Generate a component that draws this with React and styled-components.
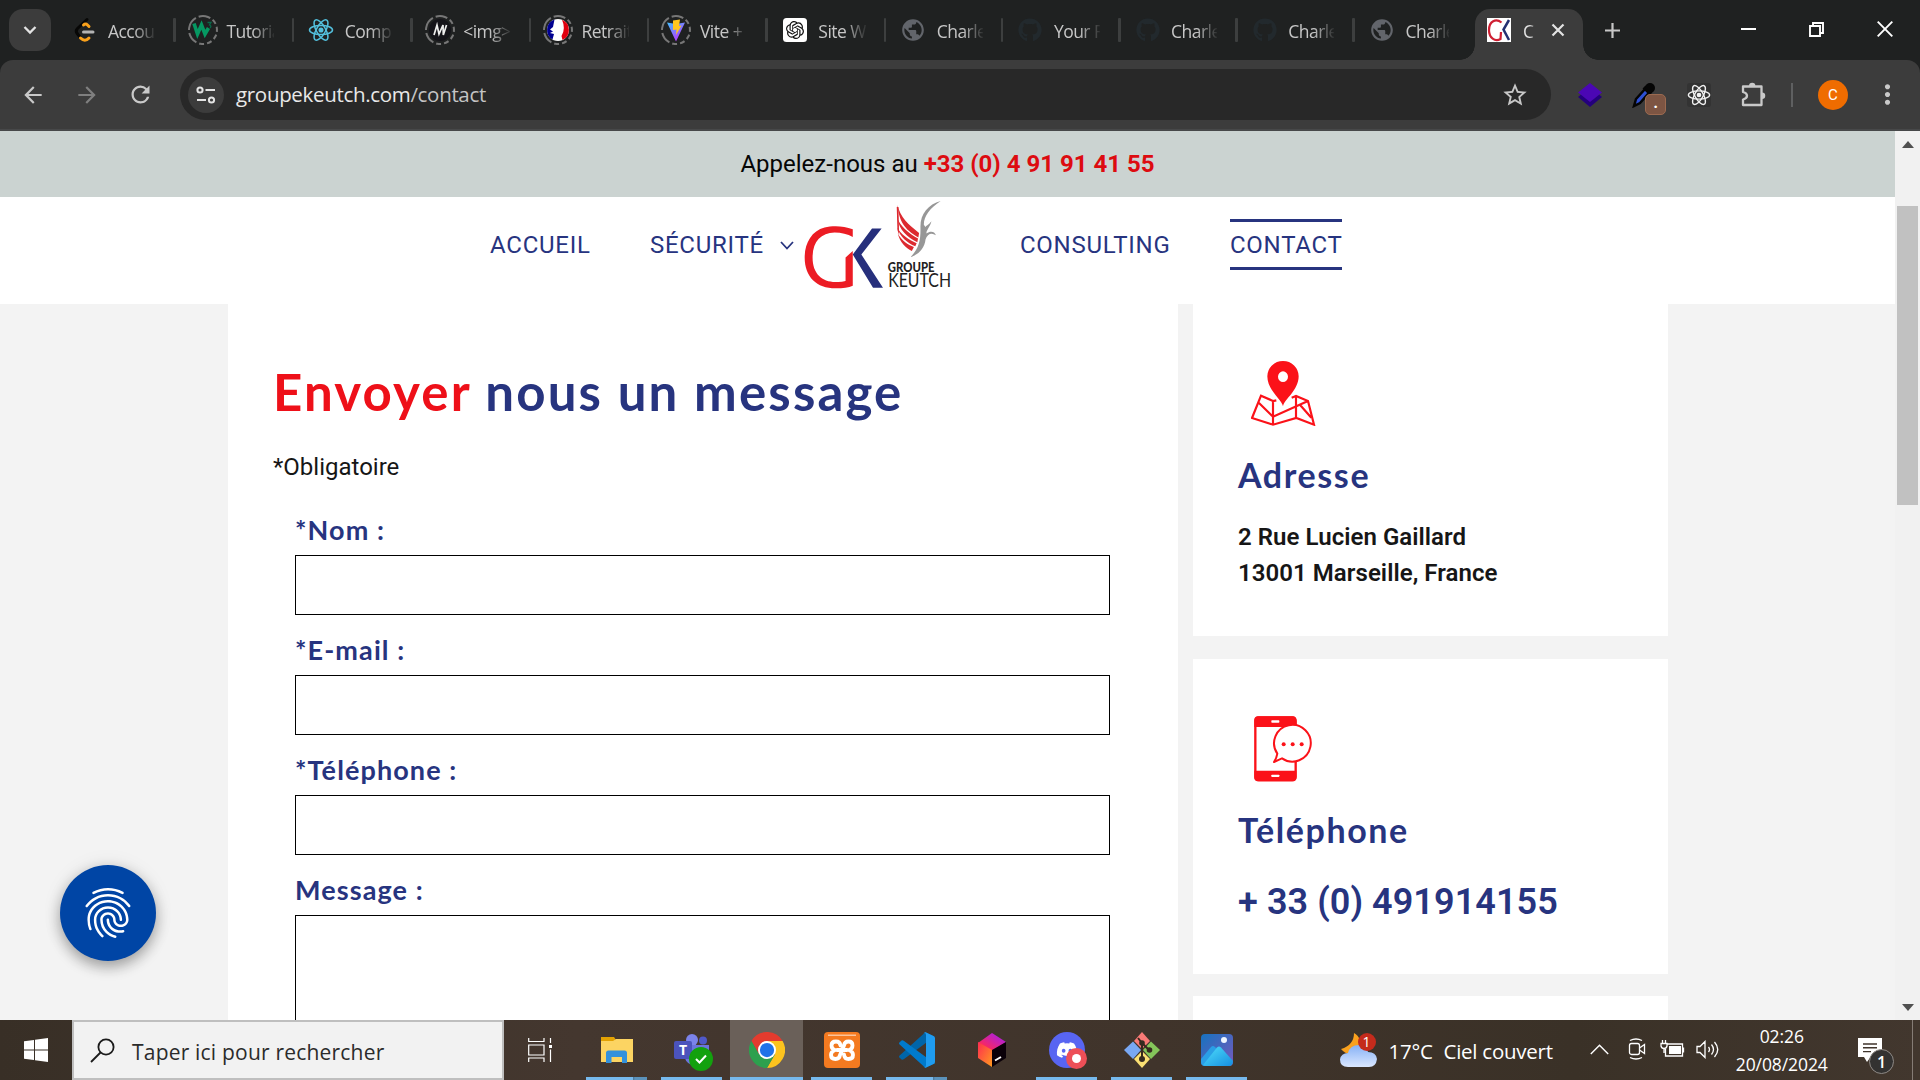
import React from "react";
import styled, { createGlobalStyle, css } from "styled-components";
import {
  MdArrowBack,
  MdArrowForward,
  MdRefresh,
  MdStarBorder,
  MdFingerprint,
  MdPublic,
  MdMoreVert,
} from "react-icons/md";
import { FaGithub, FaDiscord } from "react-icons/fa";
import { SiOpenai } from "react-icons/si";

const navy = "#27347f";
const red = "#ee1019";
const ui = `"Open Sans", "Noto Sans", sans-serif`;
const body = `Roboto, "Liberation Sans", sans-serif`;
const display = `Lato, "Open Sans", sans-serif`;

const GlobalStyle = createGlobalStyle`
  * { box-sizing: border-box; }
  body { margin: 0; overflow: hidden; }
  h1, h2, p { margin: 0; }
  svg { display: block; flex: none; }
`;

const Screen = styled.div`
  width: 1920px;
  height: 1080px;
  display: flex;
  flex-direction: column;
  overflow: hidden;
  background: #1f2121;
`;

/* ---------- browser tabs ---------- */

const TabStrip = styled.div`
  height: 60px;
  flex: none;
  display: flex;
  background: #1f2121;
  color: #c7c7c7;
  font-family: ${ui};
`;

const TabSearch = styled.button`
  width: 42px;
  height: 42px;
  margin: 9px 6.5px 0 9px;
  padding: 0;
  border: 0;
  border-radius: 14px;
  background: #3c3c3c;
  display: grid;
  place-items: center;
  flex: none;
`;

const Tab = styled.div`
  width: ${(p) => p.$width}px;
  height: 60px;
  flex: none;
  display: flex;
  align-items: center;
  padding-left: 11px;
`;

const TabTitle = styled.span`
  flex: 1;
  margin-left: 7.5px;
  margin-right: 18px;
  height: 28px;
  line-height: 30px;
  font-size: 17.5px;
  letter-spacing: -0.55px;
  white-space: nowrap;
  overflow: hidden;
  mask-image: linear-gradient(to right, #000 55%, transparent 104%);
`;

const TabDivider = styled.span`
  width: 2.5px;
  height: 24px;
  border-radius: 1px;
  background: #3d3f3f;
`;

const ActiveTab = styled.div`
  width: 108px;
  height: 51px;
  margin: 9px 0 0 8px;
  padding: 0 12px 9px;
  flex: none;
  display: flex;
  align-items: center;
  position: relative;
  background: #3c3c3c;
  border-radius: 15px 15px 0 0;
  color: #e3e3e3;
  &::before,
  &::after {
    content: "";
    position: absolute;
    bottom: 0;
    width: 15px;
    height: 15px;
  }
  &::before {
    left: -15px;
    background: radial-gradient(circle at 0 0, transparent 14.5px, #3c3c3c 15px);
  }
  &::after {
    right: -15px;
    background: radial-gradient(circle at 100% 0, transparent 14.5px, #3c3c3c 15px);
  }
`;

const ActiveTitle = styled.span`
  width: 13px;
  height: 28px;
  margin: 0 15px 0 12px;
  overflow: hidden;
  font-size: 17.5px;
  line-height: 30px;
  mask-image: linear-gradient(to right, #000 50%, transparent 100%);
`;

const NewTab = styled.div`
  margin-left: 21px;
  height: 60px;
  display: flex;
  align-items: center;
`;

const WindowControls = styled.div`
  margin-left: auto;
  margin-right: 1px;
  display: flex;
`;

const WindowButton = styled.div`
  width: 68.4px;
  height: 58px;
  display: grid;
  place-items: center;
`;

/* ---------- browser toolbar ---------- */

const ToolbarWell = styled.div`
  flex: none;
  background: #1f2121;
`;

const Toolbar = styled.div`
  height: 71px;
  padding-left: 6px;
  display: flex;
  align-items: center;
  background: #3c3c3c;
  border-bottom: 2px solid #474849;
  border-radius: 13px 13px 0 0;
  font-family: ${ui};
`;

const ToolButton = styled.div`
  width: ${(p) => p.$width || 54}px;
  height: 50px;
  display: grid;
  place-items: center;
  position: relative;
  color: ${(p) => (p.$dim ? "#7f7f7f" : "#c9c9c9")};
`;

const Omnibox = styled.div`
  width: 1371px;
  height: 51px;
  margin: 0 12px;
  padding: 0 22px 0 8px;
  border-radius: 26px;
  background: #282828;
  display: flex;
  align-items: center;
  color: #c7c7c7;
`;

const SiteInfo = styled.div`
  width: 36px;
  height: 36px;
  border-radius: 50%;
  background: #3c3c3c;
  display: grid;
  place-items: center;
`;

const Url = styled.span`
  flex: 1;
  margin-left: 12px;
  padding-bottom: 1px;
  font-size: 20.5px;
  letter-spacing: -0.32px;
  color: #c4c4c4;
  b {
    font-weight: 400;
    color: #e8e8e8;
  }
`;

const DropperBadge = styled.span`
  position: absolute;
  left: 28px;
  top: 24px;
  width: 21px;
  height: 21px;
  border-radius: 5px;
  background: #7d5543;
  border: 1px solid #9b6a50;
  color: #fff;
  font-size: 15px;
  font-weight: 700;
  line-height: 15px;
  text-align: center;
`;

const ToolDivider = styled.span`
  width: 2px;
  height: 24px;
  margin: 0 13px 0 11px;
  background: #5f6061;
`;

const Avatar = styled.span`
  width: 30px;
  height: 30px;
  border-radius: 50%;
  background: #ef6c00;
  color: #fff;
  font: 400 15px/30px ${body};
  text-align: center;
`;

/* ---------- web page ---------- */

const Viewport = styled.div`
  height: 889px;
  flex: none;
  display: flex;
  overflow: hidden;
  position: relative;
`;

const Page = styled.div`
  width: 1895px;
  height: 889px;
  display: flex;
  flex-direction: column;
  background: #f3f3f3;
  font-family: ${body};
`;

const CallBar = styled.div`
  height: 66px;
  flex: none;
  background: #cbd3d1;
  color: #060606;
  font-size: 24px;
  line-height: 66px;
  text-align: center;
  b {
    font-weight: 700;
    color: #dd0b10;
  }
`;

const NavBar = styled.nav`
  height: 107px;
  flex: none;
  padding-left: 490px;
  display: grid;
  grid-template-columns: 160px 154px 216px 210px 112px;
  background: #fff;
`;

const navText = css`
  color: ${navy};
  font-size: 24px;
  letter-spacing: 0.74px;
  white-space: nowrap;
`;

const NavLink = styled.a`
  ${navText}
  height: 51px;
  margin-top: 22px;
  padding-top: 2px;
  line-height: 43px;
  display: flex;
  align-items: center;
  gap: 16px;
  border-top: 3px solid ${(p) => (p.$active ? navy : "transparent")};
  border-bottom: 3px solid ${(p) => (p.$active ? navy : "transparent")};
`;

const LogoSlot = styled.div`
  padding-top: 3px;
`;

const Content = styled.main`
  flex: 1;
  min-height: 0;
  padding-left: 228px;
  display: flex;
  gap: 15px;
`;

const FormPanel = styled.section`
  width: 950px;
  height: 716px;
  padding: 58px 45px 0;
  background: #fff;
  overflow: hidden;
`;

const Title = styled.h1`
  font: 700 51px/60px ${display};
  letter-spacing: 2.15px;
  white-space: nowrap;
  color: ${navy};
  span {
    color: ${red};
  }
`;

const Note = styled.p`
  margin-top: 27px;
  font-size: 24px;
  line-height: 36px;
  color: #161616;
`;

const Fields = styled.div`
  margin: 27px 23px 0 22px;
  display: flex;
  flex-direction: column;
  gap: 17px;
`;

const Field = styled.div`
  display: flex;
  flex-direction: column;
  gap: 7px;
`;

const Label = styled.label`
  font: 700 27px/36px ${display};
  letter-spacing: 1.1px;
  color: ${navy};
`;

const Box = styled.div`
  height: ${(p) => p.$height}px;
  border: 1px solid #000;
  background: #fff;
`;

const Cards = styled.aside`
  width: 475px;
  display: flex;
  flex-direction: column;
  gap: 22.5px;
`;

const Card = styled.section`
  height: ${(p) => p.$height}px;
  flex: none;
  padding: 57px 45px 0;
  background: #fff;
`;

const CardIcon = styled.div`
  height: 65px;
  padding-left: ${(p) => p.$indent}px;
`;

const CardTitle = styled.h2`
  margin-top: 29px;
  font: 700 34px/40px ${display};
  letter-spacing: 1.6px;
  color: ${navy};
`;

const Address = styled.p`
  margin-top: 24px;
  font-size: 24px;
  font-weight: 600;
  line-height: 36px;
  letter-spacing: 0.05px;
  color: #161616;
  white-space: pre-line;
`;

const Phone = styled.p`
  margin-top: 25px;
  font-size: 36px;
  font-weight: 600;
  line-height: 54px;
  letter-spacing: 0.07px;
  color: ${navy};
`;

const Scrollbar = styled.div`
  width: 25px;
  padding: 10px 2px 9px;
  display: flex;
  flex-direction: column;
  align-items: center;
  background: #f1f1f1;
`;

const Thumb = styled.div`
  width: 21px;
  height: 299px;
  margin: 58px 0 auto;
  background: #c1c1c1;
`;

const ConsentButton = styled.button`
  position: absolute;
  left: 60px;
  top: 734px;
  width: 96px;
  height: 96px;
  padding: 0;
  border: 0;
  border-radius: 50%;
  display: grid;
  place-items: center;
  background: #0045a5;
  color: #fff;
  box-shadow: 0 6px 14px rgba(0, 0, 0, 0.32), 0 0 20px rgba(0, 0, 0, 0.08);
`;

/* ---------- taskbar ---------- */

const Taskbar = styled.footer`
  height: 60px;
  flex: none;
  display: flex;
  background: linear-gradient(90deg, #382f26 0%, #44372f 30%, #40342b 60%, #3a3127 82%, #42372e 100%);
  color: #fff;
  font-family: ${ui};
`;

const Start = styled.div`
  width: 72px;
  display: grid;
  place-items: center;
`;

const Search = styled.div`
  width: 432px;
  padding-left: 16px;
  display: flex;
  align-items: center;
  gap: 17px;
  border: 2px solid #bfbfbf;
  background: #f2f2f2;
  color: #2b2b2b;
  font-size: 21px;
  letter-spacing: 0.2px;
`;

const SearchText = styled.span`
  padding-top: 3px;
`;

const TaskView = styled.div`
  width: 76px;
  padding-left: 24px;
  display: flex;
  align-items: center;
`;

const Apps = styled.div`
  display: flex;
  gap: 2px;
`;

const AppButton = styled.div`
  width: 73px;
  height: 60px;
  display: flex;
  flex-direction: column;
  align-items: center;
  justify-content: space-between;
  padding-top: 12px;
  background: ${(p) => (p.$active ? "#6a6059" : "transparent")};
`;

const AppIcon = styled.div`
  width: 40px;
  height: 36px;
  display: flex;
  justify-content: center;
  position: relative;
`;

const Underline = styled.span`
  height: 3px;
  width: ${(p) => (p.$active ? 73 : 61)}px;
  background: ${(p) =>
    p.$state === "none"
      ? "transparent"
      : p.$state === "stack"
      ? "linear-gradient(90deg, #76b9ed 47px, #4a7392 47px, #5b92bb 49px)"
      : "#76b9ed"};
`;

const StatusBadge = styled.span`
  position: absolute;
  left: ${(p) => p.$left}px;
  top: ${(p) => p.$top}px;
  width: ${(p) => p.$size}px;
  height: ${(p) => p.$size}px;
  border-radius: 50%;
  display: grid;
  place-items: center;
  background: ${(p) => p.$color};
  border: ${(p) => p.$border || "0"};
  color: #fff;
  font: ${(p) => p.$font || "400 14px/1"} ${ui};
`;

const WhiteDot = styled.span`
  width: 9px;
  height: 9px;
  border-radius: 50%;
  background: #fff;
`;

const Weather = styled.div`
  margin-left: auto;
  width: 241px;
  display: flex;
  align-items: center;
  font-size: 20.5px;
  letter-spacing: -0.25px;
  white-space: nowrap;
`;

const WeatherIcon = styled.div`
  width: 36px;
  height: 36px;
  margin-right: 13px;
  position: relative;
  margin-top: -1px;
`;

const Temp = styled.span`
  width: 55px;
  padding-top: 1px;
`;

const Sky = styled.span`
  padding-top: 1px;
`;

const TrayItem = styled.div`
  width: ${(p) => p.$width}px;
  padding-bottom: 2px;
  display: grid;
  place-items: center;
`;

const Clock = styled.div`
  width: 112.5px;
  display: flex;
  flex-direction: column;
  align-items: center;
  padding-top: 2px;
  font-size: 17.5px;
  line-height: 28px;
  letter-spacing: -0.08px;
`;

const Notifications = styled.div`
  width: 74px;
  padding: 18px 0 0 20px;
  position: relative;
`;

const DesktopEdge = styled.div`
  width: 8px;
  border-left: 1.5px solid #857c75;
`;

/* ---------- drawings ---------- */

const Ring = () => (
  <circle cx="16" cy="16" r="14" fill="none" stroke="#777" strokeWidth="2" strokeDasharray="12 3 12 3 5 3 5 3 5 3 5 3 5 3" transform="rotate(-170 16 16)" />
);

const Favicon = ({ kind }) => {
  if (kind === "github")
    return <svg width="32" height="32" viewBox="0 0 32 32"><FaGithub x="4" y="4" size={24} color="#22292d" /></svg>;
  if (kind === "globe")
    return <svg width="32" height="32" viewBox="0 0 32 32"><MdPublic x="3" y="3" size={26} color="#62656b" /></svg>;
  if (kind === "openai")
    return (
      <svg width="32" height="32" viewBox="0 0 32 32">
        <rect x="4" y="4" width="24" height="24" rx="3.5" fill="#fff" />
        <SiOpenai x="7" y="7" size={18} color="#111" />
      </svg>
    );
  if (kind === "leetcode")
    return (
      <svg width="32" height="32" viewBox="0 0 32 32" fill="none" strokeLinecap="round" strokeWidth="3">
        <path d="M18 5.500 L8.500 14.500 Q6 17 8.500 20 L11 23" stroke="#070706" />
        <path d="M14.500 11 Q16.500 9 18.500 11 L20 12.500 M11.500 24 Q16 28.500 20 24" stroke="#f9a11b" />
        <path d="M14.500 18 H24" stroke="#b3b3b3" />
      </svg>
    );
  if (kind === "react") return <svg width="32" height="32" viewBox="0 0 32 32"><Atom color="#53bfdc" /></svg>;
  return (
    <svg width="32" height="32" viewBox="0 0 32 32">
      <Ring />
      {kind === "w3" && (
        <g>
          <path d="M7 9.500 L10.500 20 L14.500 11 L18 20 L21.500 14" fill="none" stroke="#059862" strokeWidth="3.600" />
          <path d="M20.500 8.500 H24 L22.500 11 Q25 12 23 14" fill="none" stroke="#08694a" strokeWidth="1.300" />
        </g>
      )}
      {kind === "mdn" && (
        <g>
          <circle cx="16" cy="16" r="11" fill="#15141a" />
          <path d="M10 21 L13 11 L15 20 L19 11 L19.300 21 L22.500 11" fill="none" stroke="#eee" strokeWidth="1.700" />
        </g>
      )}
      {kind === "france" && (
        <g>
          <circle cx="16" cy="16" r="11" fill="#fff" />
          <path d="M12.500 5.600 A11 11 0 0 0 10.500 25.500 L12 20 L8 19 L11 17.500 L8 15.500 L11 13 Z" fill="#000091" />
          <path d="M20 5.800 A11 11 0 0 1 20.500 26 L19.500 22 Q24 15 20 5.800 Z" fill="#e1000f" />
        </g>
      )}
      {kind === "vite" && (
        <g>
          <path d="M7 8.500 L16 10 L25 8.500 L16 27.500 Z" fill="url(#viteBody)" />
          <path d="M13 6.500 L20 5.500 L19 12 L21.500 11.500 L16 21 L16.500 15.500 L13 16 Z" fill="#ffc71f" />
          <defs>
            <linearGradient id="viteBody" x1="0" y1="0" x2=".6" y2="1">
              <stop offset="0" stopColor="#41c1ff" />
              <stop offset="1" stopColor="#bd34fe" />
            </linearGradient>
          </defs>
        </g>
      )}
    </svg>
  );
};

const Atom = ({ color }) => (
  <g fill="none" stroke={color} strokeWidth="1.500">
    <ellipse cx="16" cy="16" rx="11.500" ry="4.500" />
    <ellipse cx="16" cy="16" rx="11.500" ry="4.500" transform="rotate(60 16 16)" />
    <ellipse cx="16" cy="16" rx="11.500" ry="4.500" transform="rotate(120 16 16)" />
    <circle cx="16" cy="16" r="1.800" fill={color} />
  </g>
);

const KeutchFavicon = () => (
  <svg width="24" height="24" viewBox="0 0 24 24">
    <rect width="24" height="24" fill="#fff" />
    <path d="M14.500 4.500 C9 0 2 3 2 12 C2 20 8 24 13.500 21 L14 14" fill="none" stroke="#cf2033" strokeWidth="2.200" />
    <path d="M22 2 L16.500 11.500 L22 22" fill="none" stroke="#253171" strokeWidth="2.500" />
  </svg>
);

const Logo = () => (
  <svg width="147" height="90" viewBox="998 211 428 268" preserveAspectRatio="none" role="img" aria-label="Groupe Keutch">
    <path
      d="M1140 298 C1112 287 1080 287 1058 293 C1020 303 1000 340 1000 382 C1000 440 1035 474 1090 474 C1112 474 1128 471 1140 466 L1140 363 L1119 382 L1119 452 C1110 455 1100 456 1090 455 C1050 455 1023 430 1023 382 C1023 335 1047 309 1087 308 C1107 308 1125 313 1140 321 Z"
      fill="#ec1c24"
    />
    <path d="M1196 296 H1224 L1165 373 L1228 472 H1199 L1140 373 Z" fill="#262f7c" />
    <g fill="#dc2a30">
      <path d="M1270 226 C1278 262 1302 285 1333 309 L1331 323 C1300 303 1276 286 1270 226 Z" />
      <path d="M1269 262 C1278 290 1302 308 1330 326 L1328 337 C1298 320 1276 303 1269 262 Z" />
      <path d="M1269 292 C1280 314 1302 328 1326 340 L1322 349 C1298 338 1278 322 1269 292 Z" />
      <path d="M1271 311 C1284 334 1300 345 1318 351 L1312 363 C1294 354 1278 338 1271 311 Z" />
      <path d="M1268 232 L1273 232 L1275 315 L1270 300 Z" />
    </g>
    <path
      d="M1396 214 C1360 224 1337 252 1337 290 C1338 325 1335 355 1308 381 C1336 372 1349 352 1352 328 C1357 311 1370 307 1382 316 C1378 303 1364 303 1355 311 C1352 303 1365 292 1369 274 C1360 286 1351 289 1352 292 L1347 285 C1346 260 1364 236 1396 214 Z"
      fill="#979797"
    />
    <text x="1242" y="424" fontFamily={display} fontWeight="900" fontSize="39" textLength="136" lengthAdjust="spacingAndGlyphs" fill="#222">GROUPE</text>
    <text x="1243" y="470" fontFamily={display} fontWeight="400" fontSize="55" textLength="183" lengthAdjust="spacingAndGlyphs" fill="#222">KEUTCH</text>
  </svg>
);

const MapIcon = () => (
  <svg width="65" height="65" viewBox="0 0 195 195">
    <path fillRule="evenodd" fill="#fb1219" d="M96 136 C92 115 49 88 49 46 A47 46 0 0 1 143 46 C143 88 100 115 96 136 Z M96 31 A15 16 0 1 0 96 63 A15 16 0 1 0 96 31 Z" />
    <path
      d="M76 118 L66 120 L30 104 L3 171 L66 191 L136 171 L189 191 L171 120 L135 105 L122 110 M66 120 V191 M135 105 V171 M24 126 L66 167 L171 120 M148 133 L181 170"
      fill="none"
      stroke="#fb1219"
      strokeWidth="6.500"
    />
  </svg>
);

const PhoneIcon = () => (
  <svg width="58" height="66" viewBox="0 0 174 198">
    <rect x="4" y="4" width="121" height="189" rx="10" fill="#fff" stroke="#fb1219" strokeWidth="7" />
    <path d="M1 33 V12 Q1 1 12 1 H116 Q127 1 127 12 V33 Z M1 164 V185 Q1 195 12 195 H116 Q127 195 127 185 V164 Z" fill="#fb1219" />
    <rect x="52" y="13" width="24" height="7" rx="2" fill="#fff" />
    <rect x="52" y="176" width="24" height="7" rx="2" fill="#fff" />
    <path d="M70 113 A55 55 0 1 1 84 127 Q76 130 60 138 Q68 126 70 113 Z" fill="#fff" stroke="#fb1219" strokeWidth="6" strokeLinejoin="round" />
    <g fill="#fb1219">
      <circle cx="89" cy="85" r="6" />
      <circle cx="116" cy="85" r="6" />
      <circle cx="143" cy="85" r="6" />
    </g>
  </svg>
);

const appDrawings = {
  explorer: (
    <svg width="32" height="32" viewBox="0 0 32 32">
      <path d="M0 5 H13 L15 8 V13 H0 Z" fill="#e3a203" />
      <path d="M0 9 H12 L15 7 H32 V30 H0 Z" fill="#fcd462" />
      <path d="M5 31 V21 Q5 18.500 7.500 18.500 H23.500 Q26 18.500 26 21 V31 H21 V25 H10.500 V31 Z" fill="#3391dc" />
    </svg>
  ),
  teams: (
    <svg width="40" height="36" viewBox="0 0 40 36">
      <circle cx="20" cy="8" r="6" fill="#7b83eb" />
      <circle cx="31" cy="8.500" r="4" fill="#5059c9" />
      <path d="M12 13 H37 V22 Q35 30 28 28 Q24 34 18 32 Q13 30 12 22 Z" fill="#6b74dc" />
      <rect x="2" y="9" width="18" height="18" rx="2" fill="#4b53bc" />
      <text x="11" y="23" textAnchor="middle" fontFamily={ui} fontWeight="700" fontSize="14" fill="#fff">T</text>
    </svg>
  ),
  chrome: (
    <svg width="36" height="36" viewBox="0 0 48 48">
      <path d="M24 12 H44.800 A24 24 0 0 0 3.200 12 L13.600 30 Z" fill="#e33b2e" />
      <path d="M34.400 30 L24 48 A24 24 0 0 0 44.800 12 H24 Z" fill="#fcc31e" />
      <path d="M13.600 30 L3.200 12 A24 24 0 0 0 24 48 L34.400 30 Z" fill="#2da04e" />
      <circle cx="24" cy="24" r="12" fill="#fff" />
      <circle cx="24" cy="24" r="9.500" fill="#1f72e8" />
    </svg>
  ),
  xampp: (
    <svg width="36" height="36" viewBox="0 0 36 36">
      <rect width="36" height="36" rx="4" fill="#f47a20" />
      <path d="M4 2.500 H32 V4 H4 Z" fill="#fbc49a" />
      <path
        d="M16.500 13.500 Q16 9.500 12 9.500 Q7.500 9.500 7.500 13.500 Q7.500 17 11 18 Q7 19.500 7 23 Q7 27 11.500 27 Q15.500 27 16 23 L20 13.500 Q20.500 9.500 24.500 9.500 Q28.500 9.500 28.500 13.500 Q28.500 17 25 18 Q29 19.500 29 23 Q29 27 24.500 27 Q20.500 27 20 22.500 M13 18 H23"
        fill="none" stroke="#fff" strokeWidth="3.800" strokeLinejoin="round" strokeLinecap="round"
      />
    </svg>
  ),
  vscode: (
    <svg width="36" height="36" viewBox="0 0 100 100">
      <path d="M96 12 L73 1 L1 66 Q-1 69 1 71 L8 77 Q10 78 13 76 L100 12 Z" fill="#0065a9" />
      <path d="M96 88 L73 99 L1 34 Q-1 31 1 29 L8 23 Q10 22 13 24 L100 88 Z" fill="#007acc" />
      <path d="M74 99 Q71 99 68 96 Q75 100 75 92 V8 Q75 0 68 4 Q71 1 74 1 L96 11 Q100 13 100 17 V83 Q100 87 96 89 Z" fill="#1f9cf0" />
    </svg>
  ),
  toolbox: (
    <svg width="30" height="36" viewBox="0 0 30 36">
      <defs>
        <linearGradient id="boxTop" x1="0" y1="1" x2="1" y2="0">
          <stop offset=".2" stopColor="#fe2857" />
          <stop offset="1" stopColor="#9a1dff" />
        </linearGradient>
        <linearGradient id="boxLeft" x1="0" y1="0" x2="1" y2="1">
          <stop offset="0" stopColor="#fe2c50" />
          <stop offset="1" stopColor="#ff9b1f" />
        </linearGradient>
      </defs>
      <path d="M15 1 L29 10 L15 19 L1 11 Z" fill="url(#boxTop)" />
      <path d="M1 10 L15 18 V35 L1 26 Z" fill="url(#boxLeft)" />
      <path d="M29 10 L15 18 V35 L29 26 Z" fill="#0a0008" />
      <path d="M18 28.500 L24 25" stroke="#fff" strokeWidth="2" />
    </svg>
  ),
  discord: (
    <svg width="36" height="36" viewBox="0 0 36 36">
      <circle cx="18" cy="18" r="18" fill="#5865f2" />
      <FaDiscord x="7" y="7" size={22} color="#fff" />
    </svg>
  ),
  git: (
    <svg width="36" height="36" viewBox="0 0 36 36">
      <path d="M18 0 L26 9 L18 17 L10 9 Z" fill="#f97a76" />
      <path d="M9 9.500 L17 18 L9 27 L0 18 Z" fill="#79a8f3" />
      <path d="M27 9.500 L36 18 L27 27 L19 18 Z" fill="#84c55a" />
      <path d="M18 19 L26 27 L18 36 L10 27 Z" fill="#fbe073" />
      <path d="M14 6 L18 11 V27 M18 11 L25 18" stroke="#35291f" strokeWidth="2" fill="none" />
      <g fill="#35291f">
        <circle cx="18" cy="11" r="2.800" />
        <circle cx="18" cy="27" r="3" />
        <circle cx="25.500" cy="18" r="2.800" />
      </g>
    </svg>
  ),
  photos: (
    <svg width="34" height="36" viewBox="0 0 34 36">
      <defs>
        <linearGradient id="photoSky" x1="0" y1="0" x2="1" y2="1">
          <stop offset="0" stopColor="#1673bf" />
          <stop offset="1" stopColor="#7858bc" />
        </linearGradient>
        <linearGradient id="photoHill" x1="0" y1="0" x2="1" y2="1">
          <stop offset="0" stopColor="#4fe0fb" />
          <stop offset="1" stopColor="#168ee0" />
        </linearGradient>
      </defs>
      <rect x="1" y="2" width="32" height="32" rx="4" fill="url(#photoSky)" />
      <circle cx="24" cy="8" r="3" fill="#eef5ff" />
      <path d="M1 27 L11 15 Q13 13 15 15 L20 20 L7 34 H5 Q1 34 1 30 Z" fill="#2a9fe6" />
      <path d="M3 33 L17 15.500 Q19 13.500 21 15.500 L33 29 Q33 34 29 34 H6 Q4 34 3 33 Z" fill="url(#photoHill)" />
    </svg>
  ),
};

/* ---------- data ---------- */

const tabs = [
  { icon: "leetcode", title: "Accou" },
  { icon: "w3", title: "Tutoria" },
  { icon: "react", title: "Comp" },
  { icon: "mdn", title: "<img>" },
  { icon: "france", title: "Retrait" },
  { icon: "vite", title: "Vite +" },
  { icon: "openai", title: "Site W" },
  { icon: "globe", title: "Charle" },
  { icon: "github", title: "Your R" },
  { icon: "github", title: "Charle" },
  { icon: "github", title: "Charle" },
  { icon: "globe", title: "Charle", last: true },
];

const apps = [
  { name: "explorer", state: "stack" },
  { name: "teams" },
  { name: "chrome", active: true },
  { name: "xampp" },
  { name: "vscode", state: "stack" },
  { name: "toolbox", state: "none" },
  { name: "discord" },
  { name: "git" },
  { name: "photos" },
];

export default function App() {
  return (
    <Screen>
      <GlobalStyle />
      <TabStrip>
        <TabSearch>
          <svg width="14" height="10" viewBox="0 0 14 10"><path d="M1.500 2 L7 7.500 L12.500 2" fill="none" stroke="#e3e3e3" strokeWidth="2.300" /></svg>
        </TabSearch>
        {tabs.map((t, i) => (
          <Tab key={i} $width={t.last ? 112 : i < 7 ? 118.4 : 117.2}>
            <Favicon kind={t.icon} />
            <TabTitle>{t.title}</TabTitle>
            {!t.last && <TabDivider />}
          </Tab>
        ))}
        <ActiveTab>
          <KeutchFavicon />
          <ActiveTitle>C</ActiveTitle>
          <svg width="14" height="14" viewBox="0 0 14 14"><path d="M1.500 1.500 L12.500 12.500 M12.500 1.500 L1.500 12.500" stroke="#e3e3e3" strokeWidth="2.200" /></svg>
        </ActiveTab>
        <NewTab>
          <svg width="17" height="17" viewBox="0 0 17 17"><path d="M8.500 1 V16 M1 8.500 H16" stroke="#c7c7c7" strokeWidth="2.200" /></svg>
        </NewTab>
        <WindowControls>
          <WindowButton><svg width="15" height="2" viewBox="0 0 15 2"><path d="M0 1 H15" stroke="#fff" strokeWidth="2" /></svg></WindowButton>
          <WindowButton>
            <svg width="15" height="15" viewBox="0 0 15 15"><path d="M1 4 H11 V14 H1 Z M4 4 V1 H14 V11 H11" fill="none" stroke="#fff" strokeWidth="1.900" /></svg>
          </WindowButton>
          <WindowButton>
            <svg width="16" height="16" viewBox="0 0 16 16"><path d="M.7 .7 L15.300 15.300 M15.300 .7 L.7 15.300" stroke="#fff" strokeWidth="1.900" /></svg>
          </WindowButton>
        </WindowControls>
      </TabStrip>

      <ToolbarWell>
        <Toolbar>
          <ToolButton><MdArrowBack size={26} /></ToolButton>
          <ToolButton $dim><MdArrowForward size={26} /></ToolButton>
          <ToolButton $width={53}><MdRefresh size={27} /></ToolButton>
          <Omnibox style={{ marginLeft: 13 }}>
            <SiteInfo>
              <svg width="20" height="18" viewBox="0 0 20 18" fill="none" stroke="#e3e3e3" strokeWidth="2">
                <circle cx="4" cy="4" r="2.600" />
                <path d="M9.500 4 H19 M1 14 H10" />
                <circle cx="15.500" cy="14" r="2.600" />
              </svg>
            </SiteInfo>
            <Url><b>groupekeutch.com</b>/contact</Url>
            <MdStarBorder size={28} />
          </Omnibox>
          <ToolButton $width={54.25}>
            <svg width="26" height="24" viewBox="0 0 26 24">
              <path d="M1 14 L13 4 L25 14 L13 24 Z" fill="#24017c" />
              <path d="M1 9.500 L13 0 L25 9.500 L13 19 Z" fill="#4b07b4" />
            </svg>
          </ToolButton>
          <ToolButton $width={54.25}>
            <svg width="24" height="26" viewBox="0 0 24 26">
              <path d="M2 24 L4 17 L14 6 L18 9.500 L8 21 Z" fill="#2e50d3" stroke="#050505" strokeWidth="2.500" />
              <path d="M12 5 L19 12" stroke="#050505" strokeWidth="4" />
              <circle cx="18" cy="6" r="5" fill="#050505" />
            </svg>
            <DropperBadge>.</DropperBadge>
          </ToolButton>
          <ToolButton $width={54.25}>
            <svg width="24" height="24" viewBox="3 3 26 26"><rect x="3" y="3" width="26" height="26" rx="3" fill="#333" /><Atom color="#f1f1f1" /></svg>
          </ToolButton>
          <ToolButton $width={54.25}>
            <svg width="26" height="26" viewBox="0 0 26 26">
              <path d="M3 4.500 H21.500 V23 H3 V17.500 Q7 16.500 7 13.800 Q7 11 3 10 Z" fill="none" stroke="#c9c9c9" strokeWidth="2.300" strokeLinejoin="round" />
              <path d="M9 4 A3.200 3.200 0 0 1 15.400 4 Z M22 10.500 A3.200 3.200 0 0 1 22 17 Z" fill="#c9c9c9" />
            </svg>
          </ToolButton>
          <ToolDivider />
          <ToolButton><Avatar>C</Avatar></ToolButton>
          <ToolButton><MdMoreVert size={31} /></ToolButton>
        </Toolbar>
      </ToolbarWell>

      <Viewport>
        <Page>
          <CallBar>Appelez-nous au <b>+33 (0) 4 91 91 41 55</b></CallBar>
          <NavBar>
            <NavLink>ACCUEIL</NavLink>
            <NavLink>
              SÉCURITÉ
              <svg width="14" height="9" viewBox="0 0 14 9"><path d="M1 1 L7 7.500 L13 1" fill="none" stroke={navy} strokeWidth="1.800" /></svg>
            </NavLink>
            <LogoSlot><Logo /></LogoSlot>
            <NavLink>CONSULTING</NavLink>
            <NavLink $active>CONTACT</NavLink>
          </NavBar>
          <Content>
            <FormPanel>
              <Title><span>Envoyer</span> nous un message</Title>
              <Note>*Obligatoire</Note>
              <Fields>
                <Field><Label>*Nom :</Label><Box $height={60} /></Field>
                <Field><Label>*E-mail :</Label><Box $height={60} /></Field>
                <Field><Label>*Téléphone :</Label><Box $height={60} /></Field>
                <Field><Label>Message :</Label><Box $height={200} /></Field>
              </Fields>
            </FormPanel>
            <Cards>
              <Card $height={332}>
                <CardIcon $indent={13}><MapIcon /></CardIcon>
                <CardTitle>Adresse</CardTitle>
                <Address>{"2 Rue Lucien Gaillard\n13001 Marseille, France"}</Address>
              </Card>
              <Card $height={315}>
                <CardIcon $indent={16}><PhoneIcon /></CardIcon>
                <CardTitle>Téléphone</CardTitle>
                <Phone>+ 33 (0) 491914155</Phone>
              </Card>
              <Card $height={300} />
            </Cards>
          </Content>
        </Page>
        <Scrollbar>
          <svg width="12" height="7" viewBox="0 0 12 7"><path d="M6 0 L12 7 H0 Z" fill="#505050" /></svg>
          <Thumb />
          <svg width="12" height="7" viewBox="0 0 12 7"><path d="M6 7 L12 0 H0 Z" fill="#505050" /></svg>
        </Scrollbar>
        <ConsentButton aria-label="Consentement"><MdFingerprint size={60} /></ConsentButton>
      </Viewport>

      <Taskbar>
        <Start>
          <svg width="24" height="24" viewBox="0 0 24 24" fill="#fff">
            <path d="M0 3.300 L10 1.900 V11.500 H0 Z M11 1.700 L24 0 V11.500 H11 Z M0 12.500 H10 V22 L0 20.700 Z M11 12.500 H24 V24 L11 22.200 Z" />
          </svg>
        </Start>
        <Search>
          <svg width="25" height="25" viewBox="0 0 25 25" fill="none" stroke="#1b1b1b" strokeWidth="1.800">
            <circle cx="16" cy="9" r="7.600" />
            <path d="M10.500 14.500 L1 24" />
          </svg>
          <SearchText>Taper ici pour rechercher</SearchText>
        </Search>
        <TaskView>
          <svg width="25" height="24" viewBox="0 0 25 24" fill="none" stroke="#fff" strokeWidth="1.200">
            <path d="M.7 0 V3.500 H16 V0 M.7 7 H16 V17 H.7 Z M.7 24 V20 H16 V24 M22.500 0 V5 M22.500 11.500 V24" />
            <rect x="21" y="7" width="3" height="3" fill="#fff" stroke="none" />
          </svg>
        </TaskView>
        <Apps>
          {apps.map((a) => (
            <AppButton key={a.name} $active={a.active}>
              <AppIcon>
                {appDrawings[a.name]}
                {a.name === "teams" && (
                  <StatusBadge $left={17} $top={15} $size={24} $color="#13a10e">
                    <svg width="12" height="10" viewBox="0 0 12 10"><path d="M1 5 L4.500 8.500 L11 1.500" fill="none" stroke="#fff" strokeWidth="2" /></svg>
                  </StatusBadge>
                )}
                {a.name === "discord" && (
                  <StatusBadge $left={19} $top={16} $size={21} $color="#ed4f57"><WhiteDot /></StatusBadge>
                )}
              </AppIcon>
              <Underline $state={a.state} $active={a.active} />
            </AppButton>
          ))}
        </Apps>
        <Weather>
          <WeatherIcon>
            <svg width="37" height="36" viewBox="0 0 37 36">
              <defs>
                <linearGradient id="cloud" x1="0" y1="0" x2="0" y2="1">
                  <stop offset="0" stopColor="#86b1f5" />
                  <stop offset="1" stopColor="#dbe8ff" />
                </linearGradient>
              </defs>
              <path d="M14 1 Q14 13 1 17 Q7 24 14 21 Q22 16 20 8 Q18 3 14 1 Z" fill="#f9a11e" />
              <path d="M8 35 Q0 35 0 27.500 Q1 21 8 21 Q10 13 19 13 Q26 13 28 20 Q36 20 37 27 Q36 35 29 35 Z" fill="url(#cloud)" />
            </svg>
            <StatusBadge $left={18} $top={1} $size={18} $color="#c42b1c">1</StatusBadge>
          </WeatherIcon>
          <Temp>17°C</Temp>
          <Sky>Ciel couvert</Sky>
        </Weather>
        <TrayItem $width={38}>
          <svg width="19" height="11" viewBox="0 0 19 11"><path d="M.8 10 L9.500 1.200 L18.200 10" fill="none" stroke="#fff" strokeWidth="1.400" /></svg>
        </TrayItem>
        <TrayItem $width={36}>
          <svg width="18" height="22" viewBox="0 0 18 22" fill="none" stroke="#fff" strokeWidth="1.300">
            <rect x="1.500" y="5.500" width="10" height="11" rx="2" />
            <path d="M11.500 10 L16.500 6.500 V15.500 L11.500 12 M2 2.500 Q8 -.5 14 2.500 M2 19.500 Q8 22.500 14 19.500" />
          </svg>
        </TrayItem>
        <TrayItem $width={35}>
          <svg width="25" height="18" viewBox="0 0 25 18" fill="none" stroke="#fff" strokeWidth="1.300">
            <path d="M7 4 H22.500 V16 H5.500 V9 M23.500 7.500 V12.500 M1 3.500 H7 V6 Q6.500 8.500 4 8.500 Q1.500 8.500 1 6 Z M2.500 0 V3.500 M5.500 0 V3.500 M4 8.500 V13" />
            <rect x="9" y="6" width="12" height="8" fill="#fff" stroke="none" />
          </svg>
        </TrayItem>
        <TrayItem $width={36}>
          <svg width="24" height="19" viewBox="0 0 24 19" fill="none" stroke="#fff" strokeWidth="1.300">
            <path d="M1 6.500 H4 L9 1.500 V17.500 L4 12.500 H1 Z M12.500 7 Q14.500 9.500 12.500 12 M15.500 4.500 Q19.500 9.500 15.500 14.500 M18.500 2 Q25 9.500 18.500 17" />
          </svg>
        </TrayItem>
        <Clock>
          <span>02:26</span>
          <span>20/08/2024</span>
        </Clock>
        <Notifications>
          <svg width="24" height="24" viewBox="0 0 24 24">
            <path d="M0 0 H24 V19 H12.500 L9 24 L6 19 H0 Z" fill="#fff" />
            <path d="M5 6 H19 M5 9.800 H19 M5 13.600 H13" stroke="#40352c" strokeWidth="1.400" />
          </svg>
          <StatusBadge $left={31} $top={29} $size={25} $color="#333231" $border="1.500px solid #8f8a86" $font="600 16px/1">1</StatusBadge>
        </Notifications>
        <DesktopEdge />
      </Taskbar>
    </Screen>
  );
}
